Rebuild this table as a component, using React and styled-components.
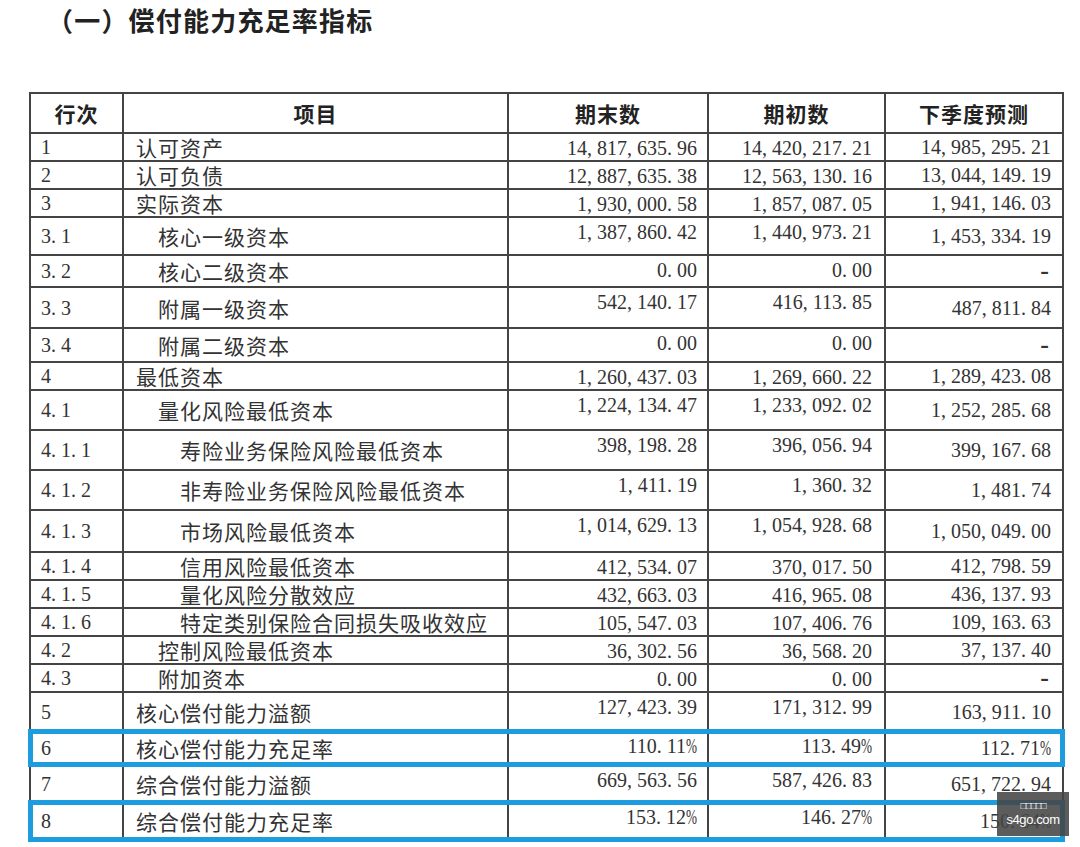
import React from 'react'
import styled, { createGlobalStyle } from 'styled-components'

const GlobalStyle = createGlobalStyle`
  body {
    margin: 0;
    background: #ffffff;
    font-family: "Noto Sans CJK SC", "Liberation Sans", sans-serif;
    color: #333333;
  }
`

const Page = styled.div`
  position: relative;
  width: 1080px;
  height: 847px;
  padding-top: 2px;
  box-sizing: border-box;
  overflow: hidden;
`

const Title = styled.h1`
  margin: 0 0 54px 47px;
  font-size: 26px;
  line-height: 36px;
  font-weight: 700;
  color: #222222;
  letter-spacing: 1.2px;
`

const Table = styled.table`
  margin-left: 29px;
  width: 1033px;
  table-layout: fixed;
  border-collapse: collapse;
  border: 2px solid #444444;
`

const Row = styled.tr`
  height: ${(p) => p.$h}px;
  outline: ${(p) => (p.$mark ? '5px solid #1d9de0' : 'none')};
  outline-offset: -3px;
`

const Th = styled.th`
  border: 2px solid #444444;
  padding: 0;
  font-size: 21px;
  font-weight: 700;
  letter-spacing: 1px;
  color: #222222;
  text-align: center;
  vertical-align: middle;
`

const NoCell = styled.td`
  border: 2px solid #444444;
  padding: 0 0 0 10px;
  vertical-align: middle;
  font-family: "Liberation Serif", serif;
  font-size: 20px;
  line-height: 24px;
  color: #333333;
`

const LabelCell = styled.td`
  border: 2px solid #444444;
  padding: 0 0 0 ${(p) => 12 + p.$level * 22}px;
  vertical-align: middle;
  font-size: 21px;
  line-height: 26px;
  letter-spacing: 1px;
  color: #333333;
  white-space: nowrap;
`

const ValueCell = styled.td`
  border: 2px solid #444444;
  padding: ${(p) => (p.$top ? '2px' : '0')} ${(p) => p.$pr}px 0 0;
  vertical-align: ${(p) => (p.$top ? 'top' : 'middle')};
  text-align: right;
  font-family: "Liberation Serif", serif;
  font-size: 20px;
  line-height: 24px;
  color: #333333;
  white-space: nowrap;
`

const Punct = styled.span`
  display: inline-block;
  width: 10px;
  text-align: left;
`

const Pct = styled.span`
  display: inline-block;
  width: 11px;
  transform: scaleX(0.66);
  transform-origin: left center;
`

const Dash = styled.span`
  font-size: 26px;
  font-weight: 700;
  padding-right: 2px;
`

const Watermark = styled.div`
  position: absolute;
  top: 792px;
  right: 11px;
  width: 72px;
  height: 44px;
  background: rgba(70, 70, 70, 0.88);
  color: #ffffff;
  display: flex;
  flex-direction: column;
  align-items: center;
  justify-content: center;
  gap: 1px;
  font-family: "Liberation Sans", sans-serif;
`

const WmBoxes = styled.div`
  font-size: 10px;
  line-height: 10px;
  letter-spacing: -1px;
`

const WmSite = styled.div`
  font-size: 13px;
  line-height: 15px;
  letter-spacing: -0.4px;
`

const Num = ({ value }) => {
  if (value === '-') return <Dash>-</Dash>
  return value.split('').map((ch, i) => {
    if (ch === ',' || ch === '.') return <Punct key={i}>{ch}</Punct>
    if (ch === '%') return <Pct key={i}>%</Pct>
    return ch
  })
}

const rows = [
  { no: '1', label: '认可资产', level: 0, a: '14,817,635.96', b: '14,420,217.21', c: '14,985,295.21', h: 28 },
  { no: '2', label: '认可负债', level: 0, a: '12,887,635.38', b: '12,563,130.16', c: '13,044,149.19', h: 28 },
  { no: '3', label: '实际资本', level: 0, a: '1,930,000.58', b: '1,857,087.05', c: '1,941,146.03', h: 28 },
  { no: '3.1', label: '核心一级资本', level: 1, a: '1,387,860.42', b: '1,440,973.21', c: '1,453,334.19', h: 38 },
  { no: '3.2', label: '核心二级资本', level: 1, a: '0.00', b: '0.00', c: '-', h: 32 },
  { no: '3.3', label: '附属一级资本', level: 1, a: '542,140.17', b: '416,113.85', c: '487,811.84', h: 41 },
  { no: '3.4', label: '附属二级资本', level: 1, a: '0.00', b: '0.00', c: '-', h: 34 },
  { no: '4', label: '最低资本', level: 0, a: '1,260,437.03', b: '1,269,660.22', c: '1,289,423.08', h: 28 },
  { no: '4.1', label: '量化风险最低资本', level: 1, a: '1,224,134.47', b: '1,233,092.02', c: '1,252,285.68', h: 40 },
  { no: '4.1.1', label: '寿险业务保险风险最低资本', level: 2, a: '398,198.28', b: '396,056.94', c: '399,167.68', h: 40 },
  { no: '4.1.2', label: '非寿险业务保险风险最低资本', level: 2, a: '1,411.19', b: '1,360.32', c: '1,481.74', h: 40 },
  { no: '4.1.3', label: '市场风险最低资本', level: 2, a: '1,014,629.13', b: '1,054,928.68', c: '1,050,049.00', h: 42 },
  { no: '4.1.4', label: '信用风险最低资本', level: 2, a: '412,534.07', b: '370,017.50', c: '412,798.59', h: 28 },
  { no: '4.1.5', label: '量化风险分散效应', level: 2, a: '432,663.03', b: '416,965.08', c: '436,137.93', h: 28 },
  { no: '4.1.6', label: '特定类别保险合同损失吸收效应', level: 2, a: '105,547.03', b: '107,406.76', c: '109,163.63', h: 28 },
  { no: '4.2', label: '控制风险最低资本', level: 1, a: '36,302.56', b: '36,568.20', c: '37,137.40', h: 27 },
  { no: '4.3', label: '附加资本', level: 1, a: '0.00', b: '0.00', c: '-', h: 28 },
  { no: '5', label: '核心偿付能力溢额', level: 0, a: '127,423.39', b: '171,312.99', c: '163,911.10', h: 39 },
  { no: '6', label: '核心偿付能力充足率', level: 0, a: '110.11%', b: '113.49%', c: '112.71%', h: 34, mark: true },
  { no: '7', label: '综合偿付能力溢额', level: 0, a: '669,563.56', b: '587,426.83', c: '651,722.94', h: 37 },
  { no: '8', label: '综合偿付能力充足率', level: 0, a: '153.12%', b: '146.27%', c: '150.64%', h: 38, mark: true },
]

const App = () => {
  return (
    <Page>
      <GlobalStyle />
      <Title>（一）偿付能力充足率指标</Title>
      <Table>
        <colgroup>
          <col style={{ width: 93 }} />
          <col style={{ width: 385 }} />
          <col style={{ width: 200 }} />
          <col style={{ width: 177 }} />
          <col style={{ width: 178 }} />
        </colgroup>
        <thead>
          <Row $h={40}>
            <Th>行次</Th>
            <Th>项目</Th>
            <Th>期末数</Th>
            <Th>期初数</Th>
            <Th>下季度预测</Th>
          </Row>
        </thead>
        <tbody>
          {rows.map((r) => (
            <Row key={r.no} $h={r.h} $mark={r.mark}>
              <NoCell><Num value={r.no} /></NoCell>
              <LabelCell $level={r.level}>{r.label}</LabelCell>
              <ValueCell $top $pr={10}><Num value={r.a} /></ValueCell>
              <ValueCell $top $pr={12}><Num value={r.b} /></ValueCell>
              <ValueCell $pr={11}><Num value={r.c} /></ValueCell>
            </Row>
          ))}
        </tbody>
      </Table>
      <Watermark>
        <WmBoxes>□□□□□</WmBoxes>
        <WmSite>s4go.com</WmSite>
      </Watermark>
    </Page>
  )
}

export default App
